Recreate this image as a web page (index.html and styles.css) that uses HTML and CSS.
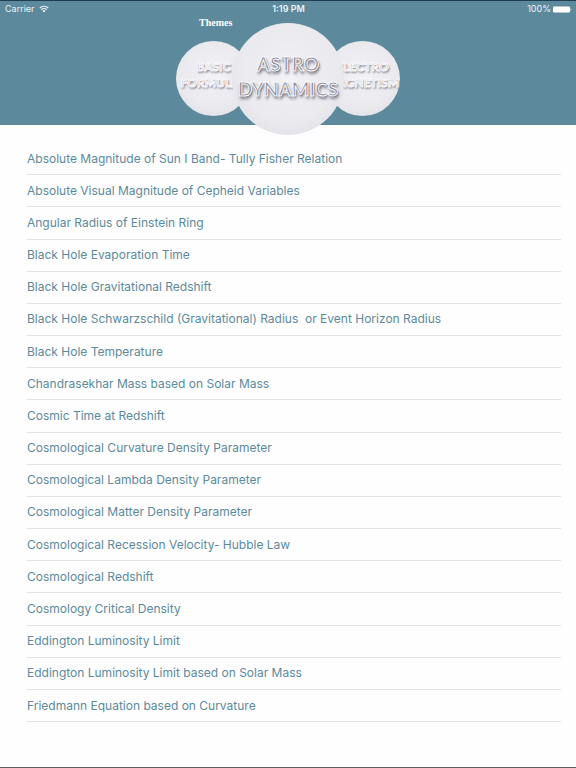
FILE: index.html
```html
<!DOCTYPE html>
<html lang="en">
<head>
<meta charset="utf-8">
<meta name="viewport" content="width=device-width, initial-scale=1">
<title>Themes</title>
<link rel="stylesheet" href="styles.css">
</head>
<body>
<header class="header">
    <div class="status-bar">
        <span class="carrier">Carrier
            <svg class="wifi" viewBox="0 0 20 15" aria-hidden="true">
                <path d="M1.5 5.5a12 12 0 0 1 17 0M4.7 8.8a7.5 7.5 0 0 1 10.6 0" fill="none" stroke="currentColor" stroke-width="2.4"/>
                <path d="M10 14.5l-3.2-3.3a4.5 4.5 0 0 1 6.4 0z" fill="currentColor"/>
            </svg>
        </span>
        <span class="time">1:19 PM</span>
        <span class="power">100%
            <svg class="battery" viewBox="0 0 38 14" aria-hidden="true">
                <rect x="0" y="1" width="34" height="12" rx="2" fill="currentColor"/>
                <path d="M35 5c2 0 2 4 0 4z" fill="currentColor"/>
            </svg>
        </span>
    </div>
    <nav class="themes">
        <div class="side">
            <h1>Themes</h1>
            <button class="theme" type="button">BASIC<br>FORMULAE</button>
        </div>
        <button class="theme theme-current" type="button">ASTRO<br>DYNAMICS</button>
        <div class="side side-right">
            <button class="theme" type="button">ELECTRO<br>MAGNETISM</button>
        </div>
    </nav>
</header>
<ul class="formulas">
    <li><a href="#">Absolute Magnitude of Sun I Band- Tully Fisher Relation</a></li>
    <li><a href="#">Absolute Visual Magnitude of Cepheid Variables</a></li>
    <li><a href="#">Angular Radius of Einstein Ring</a></li>
    <li><a href="#">Black Hole Evaporation Time</a></li>
    <li><a href="#">Black Hole Gravitational Redshift</a></li>
    <li><a href="#">Black Hole Schwarzschild (Gravitational) Radius&nbsp; or Event Horizon Radius</a></li>
    <li><a href="#">Black Hole Temperature</a></li>
    <li><a href="#">Chandrasekhar Mass based on Solar Mass</a></li>
    <li><a href="#">Cosmic Time at Redshift</a></li>
    <li><a href="#">Cosmological Curvature Density Parameter</a></li>
    <li><a href="#">Cosmological Lambda Density Parameter</a></li>
    <li><a href="#">Cosmological Matter Density Parameter</a></li>
    <li><a href="#">Cosmological Recession Velocity- Hubble Law</a></li>
    <li><a href="#">Cosmological Redshift</a></li>
    <li><a href="#">Cosmology Critical Density</a></li>
    <li><a href="#">Eddington Luminosity Limit</a></li>
    <li><a href="#">Eddington Luminosity Limit based on Solar Mass</a></li>
    <li><a href="#">Friedmann Equation based on Curvature</a></li>
</ul>
</body>
</html>
```
FILE: styles.css
```css
* {
    box-sizing: border-box;
}
body {
    margin: 0;
    min-height: 100vh;
    display: flex;
    flex-direction: column;
    font-family: Inter, "Liberation Sans", sans-serif;
    background-color: #fefefe;
    border-bottom: 1px solid #5c5c60;
}
.header {
    background-color: #5c8a9c;
    border-top: 1px solid #1f3c50;
}
.status-bar {
    display: grid;
    grid-template-columns: 1fr auto 1fr;
    align-items: center;
    height: 16px;
    padding: 0 4px 0 5px;
    font-size: 9px;
    line-height: 14px;
    color: #eaf3f6;
}
.carrier, .power {
    display: flex;
    align-items: center;
    gap: 4px;
}
.power {
    justify-content: flex-end;
    gap: 2px;
}
.time {
    font-weight: 600;
}
.wifi {
    width: 10px;
    height: 8px;
}
.battery {
    width: 19px;
    height: 7px;
    color: #fff;
}
.themes {
    display: flex;
    justify-content: center;
    align-items: flex-start;
    margin-bottom: -10px; /* the current theme hangs over the list */
}
.side h1 {
    margin: 0 0 12px;
    padding-left: 23px;
    font: bold 10px/12px "Liberation Serif", serif;
    color: #fff;
}
.side-right {
    padding-top: 24px;
}
.theme {
    display: flex;
    align-items: center;
    justify-content: center;
    width: 75px;
    height: 75px;
    padding: 0 0 8px;
    border: 0;
    border-radius: 50%;
    background: radial-gradient(circle at 50% 45%, #f3f3f6, #e9e9ee 60%, #dadae1);
    font: bold 12px/16px Lato, sans-serif;
    color: #b4b4c0;
    -webkit-text-stroke: 1px #fafafc;
    text-shadow: 1px 1px 1px #8e8e9c, 1px 2px 2px #8e8e9c;
    cursor: pointer;
}
.theme-current {
    position: relative;
    z-index: 1;
    width: 112px;
    height: 112px;
    margin: 6px -19px 0;
    padding-bottom: 6px;
    font-size: 19px;
    line-height: 25px;
    color: #8c8c9a;
    text-shadow: 1px 1px 1px #777785, 1px 3px 3px #777785;
}
.formulas {
    flex: 1;
    display: flex;
    flex-direction: column;
    list-style: none;
    margin: 0;
    padding: 18px 15px 45px 27px;
}
.formulas li {
    flex: 1;
    display: flex;
    border-bottom: 1px solid #e2e3e6;
}
.formulas a {
    flex: 1;
    display: flex;
    align-items: center;
    font-size: 12px;
    line-height: 16px;
    color: #5c8a9c;
    text-decoration: none;
}
```
